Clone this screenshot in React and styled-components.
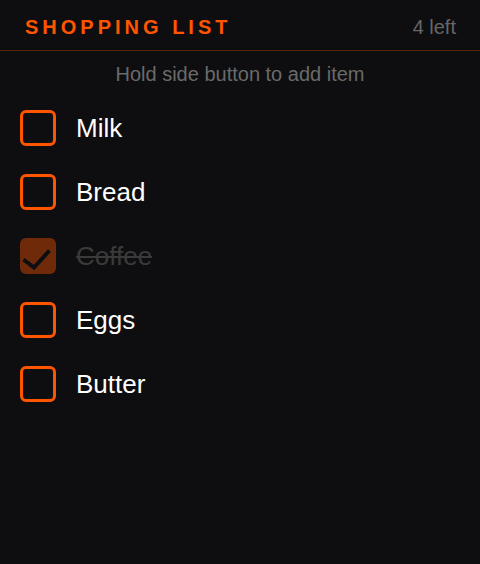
import React, { useState } from 'react';
import styled, { createGlobalStyle } from 'styled-components';

const GlobalStyle = createGlobalStyle`
  html, body {
    margin: 0;
    padding: 0;
    background: #0e0e10;
  }
  body {
    font-family: "Liberation Sans", Arial, sans-serif;
  }
`;

const initialItems = [
  { id: 1, name: 'Milk', done: false },
  { id: 2, name: 'Bread', done: false },
  { id: 3, name: 'Coffee', done: true },
  { id: 4, name: 'Eggs', done: false },
  { id: 5, name: 'Butter', done: false },
];

function App() {
  const [items, setItems] = useState(initialItems);
  const left = items.filter((i) => !i.done).length;

  const toggle = (id) =>
    setItems(items.map((i) => (i.id === id ? { ...i, done: !i.done } : i)));

  return (
    <Screen>
      <GlobalStyle />
      <Header>
        <Title>Shopping List</Title>
        <Count>{left} left</Count>
      </Header>
      <Hint>Hold side button to add item</Hint>
      <List>
        {items.map((item) => (
          <Row key={item.id} onClick={() => toggle(item.id)}>
            <Box $done={item.done}>
              {item.done && (
                <svg width="36" height="36" viewBox="0 0 36 36">
                  <path
                    d="M3.5 21.5 L14 29.5 L29.5 12.5"
                    fill="none"
                    stroke="#0e0e10"
                    strokeWidth="4"
                  />
                </svg>
              )}
            </Box>
            <Label $done={item.done}>{item.name}</Label>
          </Row>
        ))}
      </List>
    </Screen>
  );
}
export default App;

const Screen = styled.div`
  width: 480px;
  height: 564px;
  background: #0e0e10;
  overflow: hidden;
`;

const Header = styled.header`
  box-sizing: border-box;
  display: flex;
  align-items: center;
  justify-content: space-between;
  height: 51px;
  padding: 4px 24px 0 25px;
  border-bottom: 1px solid #56230b;
`;

const Title = styled.h1`
  margin: 0;
  font-size: 20px;
  font-weight: bold;
  letter-spacing: 4px;
  text-transform: uppercase;
  color: #ff5500;
`;

const Count = styled.span`
  font-size: 20px;
  color: #666;
`;

const Hint = styled.p`
  margin: 0;
  padding: 12px 0 10px;
  text-align: center;
  font-size: 20px;
  line-height: 23px;
  color: #6a6a6a;
`;

const List = styled.ul`
  list-style: none;
  margin: 0;
  padding: 0;
`;

const Row = styled.li`
  display: flex;
  align-items: center;
  gap: 20px;
  padding: 14px 20px;
  cursor: pointer;
`;

const Box = styled.div`
  box-sizing: border-box;
  width: 36px;
  height: 36px;
  border: 3px solid #ff5500;
  border-radius: 6px;
  background: ${(p) => (p.$done ? '#ff5500' : 'transparent')};
  opacity: ${(p) => (p.$done ? 0.4 : 1)};
  display: flex;
  align-items: center;
  justify-content: center;
  svg {
    margin: -3px;
    flex-shrink: 0;
  }
`;

const Label = styled.span`
  font-size: 26px;
  line-height: 30px;
  color: ${(p) => (p.$done ? '#3a3a3a' : '#ffffff')};
  text-decoration: ${(p) => (p.$done ? 'line-through' : 'none')};
`;
